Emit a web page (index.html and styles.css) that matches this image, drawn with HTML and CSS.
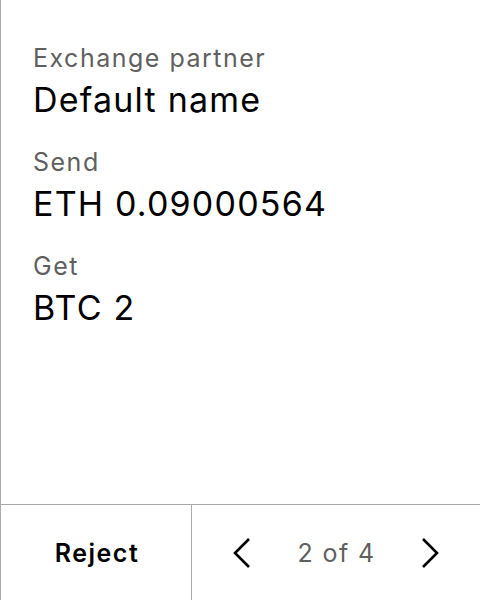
FILE: index.html
```html
<!DOCTYPE html>
<html lang="en">
<head>
<meta charset="utf-8">
<title>Exchange</title>
<link rel="stylesheet" href="styles.css">
</head>
<body>
<div class="screen">
  <main class="details">
    <div class="field">
      <div class="label">Exchange partner</div>
      <div class="value">Default name</div>
    </div>
    <div class="field">
      <div class="label">Send</div>
      <div class="value">ETH 0.09000564</div>
    </div>
    <div class="field">
      <div class="label">Get</div>
      <div class="value">BTC 2</div>
    </div>
  </main>
  <footer class="footer">
    <div class="reject">Reject</div>
    <div class="pager">
      <svg class="chev" width="24" height="32" viewBox="0 0 24 32"><path d="M19 2 L5 16 L19 30" fill="none" stroke="#000" stroke-width="2.6"/></svg>
      <span class="count">2 of 4</span>
      <svg class="chev" width="24" height="32" viewBox="0 0 24 32"><path d="M5 2 L19 16 L5 30" fill="none" stroke="#000" stroke-width="2.6"/></svg>
    </div>
  </footer>
</div>
</body>
</html>
```
FILE: styles.css
```css
html, body {
  margin: 0;
  padding: 0;
  background: #fff;
}
.screen {
  width: 480px;
  height: 600px;
  box-sizing: border-box;
  border-left: 1px solid #aaa;
  display: flex;
  flex-direction: column;
  font-family: Inter, "Noto Sans", sans-serif;
}
.details {
  flex: 1;
  padding: 42px 0 0 32px;
  display: flex;
  flex-direction: column;
  gap: 26px;
}
.field {
  display: flex;
  flex-direction: column;
  gap: 6px;
}
.label {
  font-size: 25px;
  line-height: 32px;
  letter-spacing: 1.5px;
  color: #5f5f5f;
}
.value {
  font-size: 34px;
  line-height: 40px;
  letter-spacing: 1.2px;
  color: #000;
}
.footer {
  height: 96px;
  box-sizing: border-box;
  border-top: 1px solid #aaa;
  display: grid;
  grid-template-columns: 191px 1fr;
}
.reject {
  border-right: 1px solid #aaa;
  display: flex;
  align-items: center;
  justify-content: center;
  padding-left: 2px;
  font-size: 25px;
  font-weight: 600;
  letter-spacing: 1.5px;
  color: #000;
}
.pager {
  display: flex;
  align-items: center;
  justify-content: space-between;
  padding: 0 38px;
}
.chev {
  display: block;
}
.count {
  font-size: 25px;
  letter-spacing: 1.4px;
  color: #5f5f5f;
  margin-right: -1px;
}
```
